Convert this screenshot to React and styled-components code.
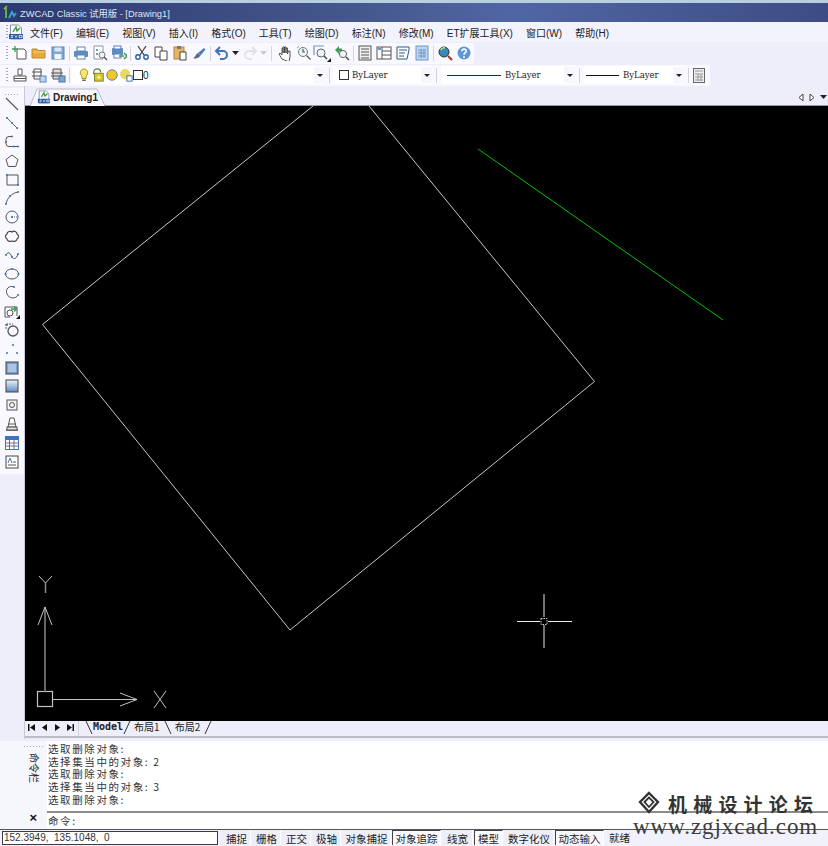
import styled, { createGlobalStyle } from "styled-components";

const GlobalStyle = createGlobalStyle`
    html, body { margin: 0; padding: 0; background: #eeeefa; }
    body { font-family: "Noto Sans CJK SC", "Liberation Sans", sans-serif; overflow: hidden; }
`;

const Page = styled.div`
    position: relative;
    width: 828px;
    height: 846px;
    display: flex;
    flex-direction: column;
    background: #eeeefa;
    overflow: hidden;
`;

const TitleBar = styled.div`
    height: 19px;
    margin-top: 3px;
    display: flex;
    align-items: center;
    gap: 3px;
    padding-left: 3px;
    color: #dfe4f2;
    font-family: "Liberation Sans", "Noto Sans CJK SC", sans-serif;
    font-size: 9.3px;
    background: linear-gradient(90deg, #2c3a70 0%, #46598f 45%, #5066a4 62%, #3d4c84 100%);
    box-shadow: 0 -3px 0 #b8cfe0;
`;

const MenuBar = styled.div`
    height: 20px;
    display: flex;
    align-items: center;
    background: #f3f3fd;
    font-family: "Liberation Sans", "Noto Sans CJK SC", sans-serif;
    font-size: 10px;
    color: #222;
`;

const MenuLogo = styled.div`
    width: 16px;
    height: 16px;
    margin-right: 6px;
    flex: none;
`;

const MenuItem = styled.span`
    margin-right: 13.1px;
    white-space: nowrap;
`;

const ToolRow = styled.div`
    height: 22px;
    display: flex;
    align-items: center;
`;

const Strip = styled.div`
    height: 21px;
    width: ${p => p.$width}px;
    display: flex;
    align-items: center;
    background: #f8f8fe;
    border-radius: 0 3px 3px 0;
`;

const Grip = styled.div`
    width: 2px;
    height: 14px;
    margin: 0 ${p => p.$right ?? 2}px 0 6px;
    background: repeating-linear-gradient(180deg, #a8a8b8 0 1px, transparent 1px 3px);
    flex: none;
`;

const Tool = styled.div`
    width: ${p => p.$w || 19}px;
    height: 18px;
    display: flex;
    align-items: center;
    justify-content: center;
    flex: none;
`;

const Sep = styled.div`
    width: 1px;
    height: 15px;
    margin: 0 ${p => p.$m ?? 1.5}px;
    background: #d4d4de;
    flex: none;
`;

const Combo = styled.div`
    width: ${p => p.$width}px;
    height: 18px;
    display: flex;
    align-items: center;
    background: #fff;
    font-family: "DejaVu Serif", "Liberation Serif", serif;
    font-size: 8.5px;
    color: #222;
    flex: none;
`;

const ComboBody = styled.div`
    flex: 1;
    display: flex;
    align-items: center;
    gap: ${p => p.$gap ?? 4}px;
    padding-left: ${p => p.$pad ?? 4}px;
`;

const Caret = styled.div`
    width: 11px;
    height: 16px;
    display: flex;
    align-items: center;
    justify-content: center;
    background: #f6f6fc;
    &::after {
        content: "";
        border: 3px solid transparent;
        border-top: 3px solid #222;
        border-bottom: 0;
    }
`;

const LineSample = styled.div`
    width: ${p => p.$width}px;
    height: 1px;
    background: ${p => p.$color};
`;

const Swatch = styled.div`
    width: 8px;
    height: 8px;
    border: 1px solid #333;
    background: #fff;
    flex: none;
`;

const Zero = styled.span`
    font-family: "Liberation Sans", sans-serif;
    font-size: 10px;
`;

const Workspace = styled.div`
    flex: 1;
    display: flex;
    min-height: 0;
`;

const LeftColumn = styled.div`
    width: 25px;
    flex: none;
    padding-top: 2px;
    box-sizing: border-box;
    border-right: 1px solid #c8c8d8;
`;

const LeftBar = styled.div`
    display: flex;
    flex-direction: column;
    align-items: center;
    width: 24px;
    padding: 6px 0 3px;
    background: #f8f8fe;
`;

const LeftGrip = styled.div`
    width: 14px;
    height: 1px;
    background: repeating-linear-gradient(90deg, #a8a8b8 0 1px, transparent 1px 3px);
`;

const LeftTool = styled.div`
    height: 18.8px;
    display: flex;
    align-items: center;
    justify-content: center;
`;

const Main = styled.div`
    flex: 1;
    display: flex;
    flex-direction: column;
    min-width: 0;
`;

const DocTabs = styled.div`
    height: 20px;
    display: flex;
    align-items: flex-end;
    padding-left: 5px;
`;

const DocTab = styled.div`
    position: relative;
    width: 76px;
    height: 18px;
    display: flex;
    align-items: center;
    gap: 2px;
    padding-left: 7px;
    box-sizing: border-box;
    font-family: "Liberation Sans", sans-serif;
    font-size: 10px;
    font-weight: 700;
    color: #222;
    & > svg:first-child { position: absolute; left: 0; top: 0; }
    & > span, & > svg:nth-child(2) { position: relative; }
`;

const TabArrows = styled.div`
    margin-left: auto;
    height: 18px;
    display: flex;
    align-items: center;
    gap: 5px;
    padding-right: 1px;
`;

const Canvas = styled.svg`
    display: block;
    width: 803px;
    height: 615px;
    background: #000;
    box-shadow: 0 -1px 0 #9a9aa4;
`;

const LayoutBar = styled.div`
    height: 15px;
    display: flex;
    align-items: flex-start;
    border-bottom: 2px solid #bdbdc6;
`;

const NavBtn = styled.div`
    width: 13px;
    height: 12px;
    display: flex;
    align-items: center;
    justify-content: center;
`;

const LayoutTab = styled.span`
    padding: ${p => p.$bold ? "0" : "0 4px 0 3px"};
    font-size: 10px;
    font-weight: ${p => p.$bold ? 700 : 400};
    font-family: ${p => p.$bold ? '"DejaVu Sans Mono", monospace' : '"Noto Sans CJK SC", sans-serif'};
    color: #222;
    line-height: 12px;
`;

const CommandPanel = styled.div`
    height: 88px;
    margin-top: 2px;
    display: flex;
`;

const CommandSide = styled.div`
    width: 47px;
    flex: none;
    display: flex;
    flex-direction: column;
    align-items: flex-end;
    padding-top: 5px;
    box-sizing: border-box;
    background: #f6f6fd;
`;

const SideGrip = styled.div`
    width: 19px;
    height: 1px;
    margin-right: 4px;
    background: repeating-linear-gradient(90deg, #a8a8b8 0 1px, transparent 1px 3px);
`;

const SideLabel = styled.div`
    margin: 6px 6px 0 0;
    writing-mode: vertical-rl;
    text-orientation: sideways;
    font-size: 10px;
    line-height: 13px;
    color: #222;
`;

const CloseMark = styled.div`
    margin: auto 10px 4px 0;
    font-family: "Liberation Sans", sans-serif;
    font-size: 13px;
    font-weight: 700;
    color: #111;
    line-height: 14px;
`;

const CommandBody = styled.div`
    flex: 1;
    display: flex;
    flex-direction: column;
    background: #fff;
`;

const History = styled.div`
    height: 72px;
    box-sizing: border-box;
    padding: 2px 0 0 1px;
    border-bottom: 2px solid #8c8c8c;
`;

const Line = styled.div`
    height: 12.7px;
    font-size: 10.5px;
    line-height: 12.7px;
    letter-spacing: 1.6px;
    color: #333;
    white-space: nowrap;
`;

const Prompt = styled(Line)`
    padding: 2px 0 0 1px;
`;

const StatusBar = styled.div`
    height: 17px;
    display: flex;
    align-items: center;
    padding: 0 0 0 2px;
    background: #f1f1fc;
    font-size: 10.5px;
    color: #222;
    box-shadow: 0 1px 0 #555 inset;
`;

const Coords = styled.div`
    width: 216px;
    height: 14px;
    box-sizing: border-box;
    margin-right: 4px;
    flex: none;
    border: 1px solid #3a3a4a;
    background: #fff;
    font-family: "Liberation Sans", sans-serif;
    font-size: 10px;
    line-height: 12px;
    padding-left: 1px;
    color: #333;
    white-space: pre;
`;

const StatusBtn = styled.div`
    width: ${p => p.$w}px;
    height: 15px;
    flex: none;
    box-sizing: border-box;
    text-align: center;
    line-height: 15px;
    white-space: nowrap;
    border-left: 1px solid ${p => p.$on ? "#444" : "transparent"};
    border-top: 1px solid ${p => p.$on ? "#444" : "transparent"};
    border-right: 1px solid #fff;
    background: ${p => p.$on ? "#f8f8fe" : "#eeeef9"};
    margin-right: 1px;
`;

const Ready = styled.div`
    padding-left: 4px;
    white-space: nowrap;
`;

const Watermark = styled.div`
    position: absolute;
    left: 633px;
    top: 789px;
    width: 195px;
    pointer-events: none;
`;

const WaterTop = styled.div`
    display: flex;
    align-items: center;
    gap: 7px;
    padding-left: 4px;
    height: 28px;
    font-size: 19px;
    font-weight: 700;
    letter-spacing: 6.2px;
    color: #333;
    white-space: nowrap;
`;

const WaterUrl = styled.div`
    margin-top: -2px;
    font-family: "Liberation Serif", serif;
    font-size: 23px;
    letter-spacing: 0.95px;
    line-height: 24px;
    color: #3c3c3c;
    white-space: nowrap;
`;

const Ic = ({ children, w = 16, h = 16 }) => (
    <svg width={w} height={h} viewBox={`0 0 ${w} ${h}`} fill="none" strokeWidth="1">{children}</svg>
);

const DocLogo = ({ s = 16 }) => (
    <svg width={s} height={s} viewBox="0 0 16 16">
        <path d="M2.5 1h8l3 3v11h-11z" fill="#fff" stroke="#8a94a8" />
        <path d="M5 8l3-5 1 4 3-3" stroke="#3a9a3a" strokeWidth="1.4" fill="none" />
        <rect x="1" y="10" width="14" height="5" fill="#2a5ca8" />
        <path d="M3 11.5h2l-2 2h2M7 11.5l1 2 1-2M11 11.5h3v2h-3z" stroke="#fff" strokeWidth="0.7" fill="none" />
    </svg>
);

const AppLogo = () => (
    <svg width="14" height="15" viewBox="0 0 14 15" fill="none">
        <path d="M3 13V3" stroke="#58b050" strokeWidth="2" />
        <path d="M1 4l3-3" stroke="#8cc840" strokeWidth="1.4" />
        <path d="M6 13l3-6 2 4 2-3" stroke="#3aa4d8" strokeWidth="1.8" />
    </svg>
);

const New = () => <Ic><path d="M5 4h7l2 2v8H5z" fill="#fff" stroke="#555" /><path d="M3 1v6M0 4h6" stroke="#3d9a52" strokeWidth="1.3" /></Ic>;
const Open = () => <Ic><path d="M1 13V4h5l1 1.5h7V13z" fill="#e8a83c" stroke="#c08a30" /><path d="M2 7h12" stroke="#f8d088" /></Ic>;
const Save = () => <Ic><rect x="2" y="2" width="12" height="12" fill="#7ea8d0" stroke="#5a84b4" /><rect x="4.5" y="2.5" width="7" height="4" fill="#d8e8f6" /><rect x="4.5" y="9" width="7" height="5" fill="#eef4fa" /></Ic>;
const Print = () => <Ic><rect x="4" y="2" width="8" height="4" fill="#fff" stroke="#5a84b4" /><rect x="1" y="6" width="14" height="6" rx="1" fill="#5c8cc4" /><rect x="4" y="10" width="8" height="4" fill="#fff" stroke="#5a84b4" /></Ic>;
const Preview = () => <Ic><path d="M2 1h9v13H2z" fill="#fff" stroke="#8a94a8" /><path d="M4 4h2v2H4zM4 8h2v2H4z" fill="#6c98c8" /><circle cx="10" cy="10" r="3" fill="#eef4fa" stroke="#777" /><path d="M12 12l3 3" stroke="#555" strokeWidth="1.4" /></Ic>;
const Publish = () => <Ic><rect x="1" y="3" width="11" height="7" rx="1" fill="#5c8cc4" /><rect x="3" y="1" width="7" height="3" fill="#fff" stroke="#5a84b4" /><rect x="3" y="9" width="7" height="4" fill="#fff" stroke="#5a84b4" /><path d="M8 11h5M13 8l3 3-3 3" stroke="#3e9a56" strokeWidth="1.6" /></Ic>;
const Cut = () => <Ic><path d="M4 1l6 9M12 1l-6 9" stroke="#444" strokeWidth="1.3" /><circle cx="4" cy="12" r="2.2" stroke="#2d5fa0" strokeWidth="1.4" /><circle cx="12" cy="12" r="2.2" stroke="#2d5fa0" strokeWidth="1.4" /></Ic>;
const Copy = () => <Ic><path d="M2 2h7v10H2z" fill="#fff" stroke="#444" /><path d="M7 6h7v9H7z" fill="#fff" stroke="#444" /></Ic>;
const Paste = () => <Ic><rect x="2" y="2" width="10" height="12" fill="#e4b464" stroke="#b08840" /><rect x="5" y="1" width="4" height="3" fill="#777" /><path d="M8 7h6v8H8z" fill="#fff" stroke="#444" /></Ic>;
const Brush = () => <Ic><path d="M7 8l6-5 1.500 1.500-5 6z" fill="#4a7cb8" /><path d="M2 13c2 0 2.500-4 5-5l2.500 2.500c-1 2-4 4-7.500 2.500z" fill="#5c6c88" /></Ic>;
const Undo = () => <Ic><path d="M3 6h6a4 4 0 0 1 0 8H6" stroke="#3f74bb" strokeWidth="2" /><path d="M6 2L2 6l4 4" stroke="#3f74bb" strokeWidth="2" /></Ic>;
const Redo = () => <Ic><path d="M13 6H7a4 4 0 0 0 0 8h3" stroke="#dfe2ea" strokeWidth="2" /><path d="M10 2l4 4-4 4" stroke="#dfe2ea" strokeWidth="2" /></Ic>;
const Mini = ({ c }) => <svg width="7" height="4"><path d="M0 0h7L3.5 4z" fill={c} /></svg>;
const Hand = () => <Ic><path d="M5 14L2 9l1-1 2 2V3h1v5-6h1.500v6-6H9v6-5h1.500v6l1-3h1.500v6l-1 5z" fill="#fff" stroke="#444" strokeWidth="0.9" /></Ic>;
const ZoomRt = () => <Ic><circle cx="7" cy="7" r="4.500" fill="#eef4fa" stroke="#777" /><path d="M7 4v3h2M10.500 10.500l4 4" stroke="#555" strokeWidth="1.200" /><path d="M1 3l2-2" stroke="#999" /></Ic>;
const ZoomWin = () => <svg width="19" height="18" viewBox="0 0 19 18" fill="none"><path d="M1 11V2h10" stroke="#6c98c8" strokeWidth="1.200" /><circle cx="8" cy="9" r="4" fill="#eef4fa" stroke="#666" /><path d="M11 12l3 3" stroke="#444" strokeWidth="1.400" /><path d="M18 14v4h-4z" fill="#111" /></svg>;
const ZoomPrev = () => <Ic><path d="M1 5l4-4v2.500h3v3H5V9z" fill="#3e9a56" /><circle cx="9" cy="9" r="3.600" fill="#eef4fa" stroke="#666" /><path d="M12 12l3 3" stroke="#444" strokeWidth="1.400" /></Ic>;
const Props = () => <Ic><rect x="2" y="1" width="12" height="14" fill="#f0f0f0" stroke="#555" /><path d="M4 4h8M4 7h8M4 10h8M4 13h8" stroke="#555" /></Ic>;
const Design = () => <Ic><rect x="1" y="2" width="14" height="12" fill="#fff" stroke="#555" /><path d="M6 2v12M6 6h9M6 10h9" stroke="#555" /><rect x="2" y="3" width="3" height="2" fill="#6c98c8" /></Ic>;
const Palette = () => <Ic><path d="M2 2h12v3l-2 9H2z" fill="#fff" stroke="#2d5a8a" /><path d="M4 5h8M4 8h6M4 11h5" stroke="#2d5a8a" /></Ic>;
const Calc = () => <Ic><rect x="2" y="1" width="12" height="14" fill="#bcd4ee" stroke="#6c98c8" /><path d="M4 5h8M4 8h8M4 11h8M7 5v8M10 5v8" stroke="#6c98c8" /></Ic>;
const Search = () => <Ic><circle cx="7" cy="7" r="5" fill="#3a88b8" stroke="#333" /><path d="M4 5a3 3 0 0 1 4-2" stroke="#c4e860" strokeWidth="1.600" /><path d="M11 11l4 4" stroke="#a83818" strokeWidth="2.200" /></Ic>;
const Help = () => (
    <svg width="16" height="16" viewBox="0 0 16 16">
        <circle cx="8" cy="8" r="6.500" fill="#5c98d8" />
        <path d="M5.800 6.200a2.200 2 0 1 1 3.400 1.600c-.8.500-1.200.9-1.200 1.900" stroke="#fff" strokeWidth="1.600" fill="none" />
        <circle cx="8" cy="12" r="1" fill="#fff" />
    </svg>
);
const LayerA = () => <Ic><path d="M6 2h4v6H6z" fill="#fff" stroke="#555" /><path d="M2 14V9h12v5z" fill="#fff" stroke="#555" /><path d="M2 11.500h12" stroke="#555" /></Ic>;
const LayerB = () => <Ic><path d="M1 5h10M1 9h10" stroke="#555" /><path d="M3 2h7v10H3z" stroke="#555" /><rect x="9" y="9" width="6" height="6" fill="#bcd4ee" stroke="#5a84b4" /></Ic>;
const LayerC = () => <Ic><path d="M3 2h8v10H3z" fill="#ddd" stroke="#555" /><path d="M1 6h12M1 9h12" stroke="#555" /><rect x="9" y="9" width="6" height="6" fill="#7ea8d0" stroke="#3f74bb" /></Ic>;
const Bulb = () => <Ic><path d="M8 1a4.500 4.500 0 0 1 2.400 8.200V12H5.600V9.200A4.500 4.500 0 0 1 8 1z" fill="#f8e868" stroke="#9a8a30" /><path d="M6 14h4" stroke="#555" strokeWidth="1.500" /></Ic>;
const SunLock = () => <Ic><path d="M3 7V5a4 4 0 0 1 8 0" stroke="#5a7a3a" strokeWidth="1.300" /><rect x="4" y="6" width="10" height="9" fill="#d8c830" stroke="#7a7a20" /><circle cx="9" cy="10.500" r="2" fill="#f8f080" /></Ic>;
const Sun = () => <Ic><circle cx="8" cy="8" r="6" fill="#f4c820" stroke="#4a7ab8" /></Ic>;
const Frozen = () => <Ic><circle cx="7" cy="7" r="5.500" fill="#ecd85a" stroke="#d8d088" strokeDasharray="2 1" /><rect x="9" y="9" width="6" height="6" fill="#fff" stroke="#2d5fa0" /></Ic>;
const CalcGray = () => <svg width="12" height="15" viewBox="0 0 12 15"><rect x=".5" y=".5" width="11" height="14" fill="#eee" stroke="#666" /><path d="M2 3h8M2 6h8M2 9h8M2 12h8M5 6v7M8 6v7" stroke="#999" /></svg>;

const Line1 = () => <Ic><path d="M2 2l12 12" stroke="#555" strokeWidth="1.100" /></Ic>;
const Line2 = () => <Ic><path d="M2 2l12 12" stroke="#666" /><circle cx="3" cy="3" r="1" fill="#3f74bb" /><circle cx="8" cy="8" r="1" fill="#3f74bb" /><circle cx="13" cy="13" r="1" fill="#3f74bb" /></Ic>;
const Poly = () => <Ic><path d="M8 2.500H5a3 3 0 0 0-3 3v4a3 3 0 0 0 3 3h9" stroke="#555" /><circle cx="8" cy="2.500" r="1" fill="#3f74bb" /><circle cx="2" cy="8" r="1" fill="#3f74bb" /><circle cx="10" cy="12.500" r="1" fill="#3f74bb" /><circle cx="14" cy="12.500" r="1" fill="#3f74bb" /></Ic>;
const Pent = () => <Ic><path d="M8 2l6 4.500-2.200 7H4.200L2 6.500z" stroke="#555" /></Ic>;
const RectI = () => <Ic><path d="M3 3h11v10H3z" stroke="#555" /><circle cx="3" cy="3" r="1.100" fill="#3f74bb" /><circle cx="14" cy="13" r="1.100" fill="#3f74bb" /></Ic>;
const Arc = () => <Ic><path d="M2 14C3 8 8 3 14 2" stroke="#555" /><circle cx="2" cy="14" r="1" fill="#3f74bb" /><circle cx="6" cy="6" r="1" fill="#3f74bb" /><circle cx="14" cy="2" r="1" fill="#3f74bb" /></Ic>;
const CircleI = () => <Ic><circle cx="8" cy="8" r="6" stroke="#555" /><path d="M8 8h5" stroke="#3f74bb" strokeDasharray="1 1" /><circle cx="8" cy="8" r="1" fill="#555" /></Ic>;
const Cloud = () => <Ic><path d="M3 6c0-3 4-3 5-2 2-2 5 0 5 2 2 1 2 4 0 5 0 2-3 3-5 2-2 1-5 0-5-2-2-1-2-4 0-5z" stroke="#444" strokeWidth="1.200" /></Ic>;
const Spline = () => <Ic><path d="M2 8c3-5 5 0 6 2s4 3 6-3" stroke="#555" /><circle cx="2" cy="8" r="1" fill="#3f74bb" /><circle cx="8" cy="10" r="1" fill="#3f74bb" /><circle cx="14" cy="7" r="1" fill="#3f74bb" /></Ic>;
const Ell = () => <Ic><ellipse cx="8" cy="8" rx="6.500" ry="5" stroke="#555" /><circle cx="8" cy="3" r="1" fill="#3f74bb" /><circle cx="1.500" cy="8" r="1" fill="#3f74bb" /><circle cx="14.500" cy="8" r="1" fill="#3f74bb" /></Ic>;
const EllArc = () => <Ic><path d="M10 3C5 1 1 5 3 10s9 5 11 1" stroke="#555" /><circle cx="10" cy="3" r="1" fill="#3f74bb" /><circle cx="14" cy="11" r="1" fill="#3f74bb" /></Ic>;
const Insert = () => <Ic><path d="M1 4h12v9" stroke="#555" /><path d="M1 4v10h5" stroke="#555" /><circle cx="6" cy="10" r="3" fill="#fff" stroke="#555" /><path d="M7 6h5M10 3.500l2.500 2.500-2.500 2.500" stroke="#3e9a56" strokeWidth="1.400" /><path d="M16 12v4h-4z" fill="#111" /></Ic>;
const Block = () => <Ic><path d="M2 2h7M2 2v6" stroke="#555" strokeDasharray="2 1" /><circle cx="9" cy="9" r="5" stroke="#555" strokeWidth="1.300" /><circle cx="3" cy="3" r="1" fill="#3f74bb" /></Ic>;
const Points = () => <Ic><circle cx="9" cy="4" r="1" fill="#3f74bb" /><circle cx="3" cy="12" r="1" fill="#3f74bb" /><circle cx="13" cy="12" r="1" fill="#3f74bb" /></Ic>;
const Hatch = () => <Ic><rect x="2" y="2" width="12" height="12" fill="#7ea4d0" stroke="#444" /><rect x="4" y="4" width="8" height="8" fill="#a9c4e4" /></Ic>;
const Gradient = () => <svg width="16" height="16" viewBox="0 0 16 16"><defs><linearGradient id="gr" x1="0" y1="0" x2="0" y2="1"><stop offset="0" stopColor="#eef4fa" /><stop offset="1" stopColor="#5c8cc4" /></linearGradient></defs><rect x="2" y="2" width="12" height="12" fill="url(#gr)" stroke="#444" /></svg>;
const Region = () => <Ic><rect x="3" y="3" width="10" height="10" fill="#f4f4f4" stroke="#555" /><circle cx="8" cy="8" r="2.500" stroke="#555" /></Ic>;
const Wipe = () => <Ic><path d="M6 2h4l2 9H4z" fill="#fff" stroke="#555" /><path d="M4.500 8h7" stroke="#555" /><path d="M2 14h12" stroke="#555" strokeWidth="1.500" /><rect x="3" y="11" width="10" height="3" fill="#ddd" stroke="#555" /></Ic>;
const Table = () => <Ic><rect x="1.500" y="1.500" width="13" height="13" fill="#fff" stroke="#3f74bb" /><rect x="1.500" y="1.500" width="13" height="3.500" fill="#3f74bb" /><path d="M1.500 8h13M1.500 11h13M5.500 5v9M10 5v9" stroke="#7a6a7a" /></Ic>;
const MText = () => <Ic><rect x="2" y="2" width="12" height="12" fill="#fff" stroke="#444" /><path d="M4 9l2-5 2 5" stroke="#3f74bb" /><path d="M9 8h3M4 11h8" stroke="#555" /></Ic>;

const NavGlyph = ({ d }) => <svg width="9" height="9" viewBox="0 0 9 9"><path d={d} fill="#111" /></svg>;
const Slant = ({ back }) => <svg width="8" height="14" viewBox="0 0 8 14"><path d={back ? "M1 0l6 13" : "M1 13L7 0"} stroke="#333" fill="none" /></svg>;

const menus = ["文件(F)", "编辑(E)", "视图(V)", "插入(I)", "格式(O)", "工具(T)", "绘图(D)", "标注(N)", "修改(M)", "ET扩展工具(X)", "窗口(W)", "帮助(H)"];
const leftTools = [Line1, Line2, Poly, Pent, RectI, Arc, CircleI, Cloud, Spline, Ell, EllArc, Insert, Block, Points, Hatch, Gradient, Region, Wipe, Table, MText];
const history = ["选取删除对象:", "选择集当中的对象: 2", "选取删除对象:", "选择集当中的对象: 3", "选取删除对象:"];
const statusBtns = [
    ["捕捉", 29], ["栅格", 29], ["正交", 29], ["极轴", 29], ["对象捕捉", 49], ["对象追踪", 49, true],
    ["线宽", 31], ["模型", 29, true], ["数字化仪", 50], ["动态输入", 49, true],
];

export default function App() {
    return (
        <Page>
            <GlobalStyle />
            <TitleBar><AppLogo /><span>ZWCAD Classic 试用版 - [Drawing1]</span></TitleBar>
            <MenuBar>
                <Grip $right={0} />
                <MenuLogo><DocLogo /></MenuLogo>
                {menus.map(m => <MenuItem key={m}>{m}</MenuItem>)}
            </MenuBar>
            <ToolRow>
                <Strip $width={474}>
                    <Grip />
                    <Tool><New /></Tool><Tool><Open /></Tool><Tool><Save /></Tool>
                    <Sep />
                    <Tool><Print /></Tool><Tool><Preview /></Tool><Tool><Publish /></Tool>
                    <Sep />
                    <Tool><Cut /></Tool><Tool><Copy /></Tool><Tool><Paste /></Tool><Tool><Brush /></Tool>
                    <Sep />
                    <Tool><Undo /></Tool><Tool $w={9}><Mini c="#222" /></Tool>
                    <Tool><Redo /></Tool><Tool $w={9}><Mini c="#ccc" /></Tool>
                    <Sep $m={3} />
                    <Tool><Hand /></Tool><Tool><ZoomRt /></Tool><Tool><ZoomWin /></Tool><Tool><ZoomPrev /></Tool>
                    <Sep />
                    <Tool><Props /></Tool><Tool><Design /></Tool><Tool><Palette /></Tool><Tool><Calc /></Tool>
                    <Sep />
                    <Tool><Search /></Tool><Tool><Help /></Tool>
                </Strip>
            </ToolRow>
            <ToolRow>
                <Strip $width={710}>
                    <Grip />
                    <Tool><LayerA /></Tool><Tool><LayerB /></Tool><Tool><LayerC /></Tool>
                    <Sep $m={2} />
                    <Combo $width={253}>
                        <ComboBody $gap={0} $pad={5}>
                            <Tool $w={14}><Bulb /></Tool><Tool $w={14}><SunLock /></Tool>
                            <Tool $w={14}><Sun /></Tool><Tool $w={14}><Frozen /></Tool>
                            <Swatch /><Zero>0</Zero>
                        </ComboBody>
                        <Caret />
                    </Combo>
                    <Sep $m={3.5} />
                    <Combo $width={99}>
                        <ComboBody $pad={6} $gap={3}><Swatch /><span>ByLayer</span></ComboBody>
                        <Caret />
                    </Combo>
                    <Sep $m={4} />
                    <Combo $width={134}>
                        <ComboBody $pad={6}><LineSample $width={54} $color="#4a1a2a" /><span>ByLayer</span></ComboBody>
                        <Caret />
                    </Combo>
                    <Sep $m={4} />
                    <Combo $width={100}>
                        <ComboBody $pad={2}><LineSample $width={33} $color="#111" /><span>ByLayer</span></ComboBody>
                        <Caret />
                    </Combo>
                    <Sep $m={3.5} />
                    <Tool $w={14}><CalcGray /></Tool>
                </Strip>
            </ToolRow>
            <Workspace>
                <LeftColumn>
                    <LeftBar>
                        <LeftGrip />
                        {leftTools.map((T, i) => <LeftTool key={i}><T /></LeftTool>)}
                    </LeftBar>
                </LeftColumn>
                <Main>
                    <DocTabs>
                        <DocTab>
                            <svg width="76" height="18" viewBox="0 0 76 18"><path d="M0 18L7 1h60l8 17" fill="#f8f8fe" stroke="#b8b8c8" /></svg>
                            <DocLogo s={14} />
                            <span>Drawing1</span>
                        </DocTab>
                        <TabArrows>
                            <svg width="6" height="9"><path d="M5 1v7L1 4.500z" fill="#fff" stroke="#444" /></svg>
                            <svg width="6" height="9"><path d="M1 1v7l4-3.500z" fill="#fff" stroke="#444" /></svg>
                            <svg width="7" height="4"><path d="M0 0h7L3.500 4z" fill="#222" /></svg>
                        </TabArrows>
                    </DocTabs>
                    <Canvas viewBox="25 106 803 615">
                        <path d="M313 106L42.500 324.500 290 630 594.500 381.500 369 106" stroke="#c8c8c8" fill="none" />
                        <path d="M478 149L723 320" stroke="#00c000" fill="none" />
                        <g stroke="#c4c4c4" fill="none">
                            <rect x="37.500" y="691.500" width="15" height="15" strokeWidth="1.200" />
                            <path d="M45 692V607" stroke="#8a8a8a" strokeWidth="1.500" />
                            <path d="M38 625l7-18 7 18" />
                            <path d="M53 699.500H137" />
                            <path d="M120 693l17 6.500-17 6.500" />
                            <path d="M39 576l6.500 7 6.500-7" />
                            <path d="M45.500 583v10" stroke="#8a8a8a" strokeWidth="1.500" />
                            <path d="M154 691l12 17M166 691l-12 17" />
                            <path d="M544 594V617M544 625V648" stroke="#999" strokeWidth="1.500" />
                            <path d="M517 621.500H540M548 621.500H572" stroke="#eee" />
                            <rect x="541" y="618.500" width="6" height="6" stroke="#ccc" strokeDasharray="1.500 1" />
                        </g>
                    </Canvas>
                    <LayoutBar>
                        <NavBtn><NavGlyph d="M1 1h1.500v7H1zM8 1v7L3 4.500z" /></NavBtn>
                        <NavBtn><NavGlyph d="M7 1v7L2 4.500z" /></NavBtn>
                        <NavBtn><NavGlyph d="M2 1v7l5-3.500z" /></NavBtn>
                        <NavBtn><NavGlyph d="M6.500 1H8v7H6.500zM1 1v7l5-3.500z" /></NavBtn>
                        <Sep $m={1} />
                        <Tool $w={5} />
                        <Slant back /><LayoutTab $bold>Model</LayoutTab><Slant />
                        <LayoutTab>布局1</LayoutTab><Slant back />
                        <LayoutTab>布局2</LayoutTab><Slant />
                    </LayoutBar>
                </Main>
            </Workspace>
            <CommandPanel>
                <CommandSide>
                    <SideGrip />
                    <SideLabel>命令栏</SideLabel>
                    <CloseMark>×</CloseMark>
                </CommandSide>
                <CommandBody>
                    <History>{history.map((l, i) => <Line key={i}>{l}</Line>)}</History>
                    <Prompt>命令:</Prompt>
                </CommandBody>
            </CommandPanel>
            <StatusBar>
                <Coords>152.3949,  135.1048,  0</Coords>
                {statusBtns.map(([t, w, on]) => <StatusBtn key={t} $w={w} $on={on}>{t}</StatusBtn>)}
                <Ready>就绪</Ready>
            </StatusBar>
            <Watermark>
                <WaterTop>
                    <svg width="24" height="24" viewBox="0 0 22 24" fill="none" stroke="#333" strokeWidth="2.400">
                        <path d="M11 2l9 9-9 10-9-10z" />
                        <path d="M6.500 11l4.500-4.500L15.500 11 11 16z" strokeWidth="1.800" />
                    </svg>
                    <span>机械设计论坛</span>
                </WaterTop>
                <WaterUrl>www.zgjxcad.com</WaterUrl>
            </Watermark>
        </Page>
    );
}
